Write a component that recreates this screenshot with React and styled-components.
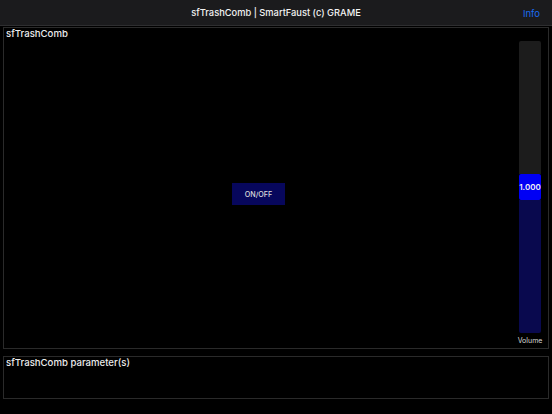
import React from "react"
import styled, { createGlobalStyle } from "styled-components"

const Global = createGlobalStyle`
  html, body {
    margin: 0;
    padding: 0;
    background: #000;
    font-family: Inter, "Liberation Sans", sans-serif;
  }
`;

const Page = styled.div`
  width: 552px;
  height: 414px;
  background: #000;
  display: flex;
  flex-direction: column;
  overflow: hidden;
`;

const Header = styled.div`
  height: 25px;
  background: #1b1b1d;
  border-bottom: 1px solid #2e2e30;
  display: flex;
  align-items: center;
  justify-content: center;
  position: relative;
  color: #f2f2f2;
  font-size: 9.3px;
  font-weight: 500;
`;

const InfoLink = styled.span`
  position: absolute;
  right: 12px;
  top: 8px;
  color: #1a6cf0;
  font-size: 9.5px;
  font-weight: 400;
`;

const Panel = styled.div`
  margin: ${(p) => p.top}px 3px 0 3px;
  height: ${(p) => p.height}px;
  border: 1px solid #2a2a2a;
  display: flex;
  flex-direction: column;
`;

const PanelTitle = styled.div`
  color: #ececec;
  font-size: 9.6px;
  font-weight: 500;
  padding: 0 0 0 2px;
  line-height: 12px;
  margin-top: 0px;
`;

const Body = styled.div`
  flex: 1;
  display: flex;
  flex-direction: row;
`;

const Stage = styled.div`
  flex: 1;
  display: flex;
  align-items: center;
  justify-content: center;
  padding: 0 6px 0 0;
`;

const ToggleButton = styled.div`
  width: 53px;
  height: 22px;
  background: #07075c;
  color: #dcdcdc;
  font-size: 7.2px;
  font-weight: 500;
  display: flex;
  align-items: center;
  justify-content: center;
`;

const SliderColumn = styled.div`
  width: 22px;
  margin: 1px 7px 0 0;
  display: flex;
  flex-direction: column;
  align-items: center;
`;

const Track = styled.div`
  width: 22px;
  height: 292px;
  border-radius: 2px;
  overflow: hidden;
  display: flex;
  flex-direction: column;
`;

const TrackTop = styled.div`
  background: #1c1c1c;
`;

const Thumb = styled.div`
  height: 26px;
  background: #0000f5;
  color: #f4f4f4;
  font-size: 8px;
  font-weight: 600;
  display: flex;
  align-items: center;
  justify-content: center;
  border-radius: 2px;
`;

const TrackFill = styled.div`
  flex: 1;
  background: #09094e;
`;

const SliderLabel = styled.div`
  color: #d8d8d8;
  font-size: 7px;
  margin-top: 3px;
`;

export default function App() {
  const value = 1.0;
  const topHeight = 133;
  return (
    <Page>
      <Global />
      <Header>
        sfTrashComb | SmartFaust (c) GRAME
        <InfoLink>Info</InfoLink>
      </Header>
      <Panel top={1} height={320}>
        <PanelTitle>sfTrashComb</PanelTitle>
        <Body>
          <Stage>
            <ToggleButton>ON/OFF</ToggleButton>
          </Stage>
          <SliderColumn>
            <Track>
              <TrackTop style={{ height: topHeight }} />
              <Thumb>{value.toFixed(3)}</Thumb>
              <TrackFill />
            </Track>
            <SliderLabel>Volume</SliderLabel>
          </SliderColumn>
        </Body>
      </Panel>
      <Panel top={7} height={41}>
        <PanelTitle>sfTrashComb parameter(s)</PanelTitle>
      </Panel>
    </Page>
  )
}
